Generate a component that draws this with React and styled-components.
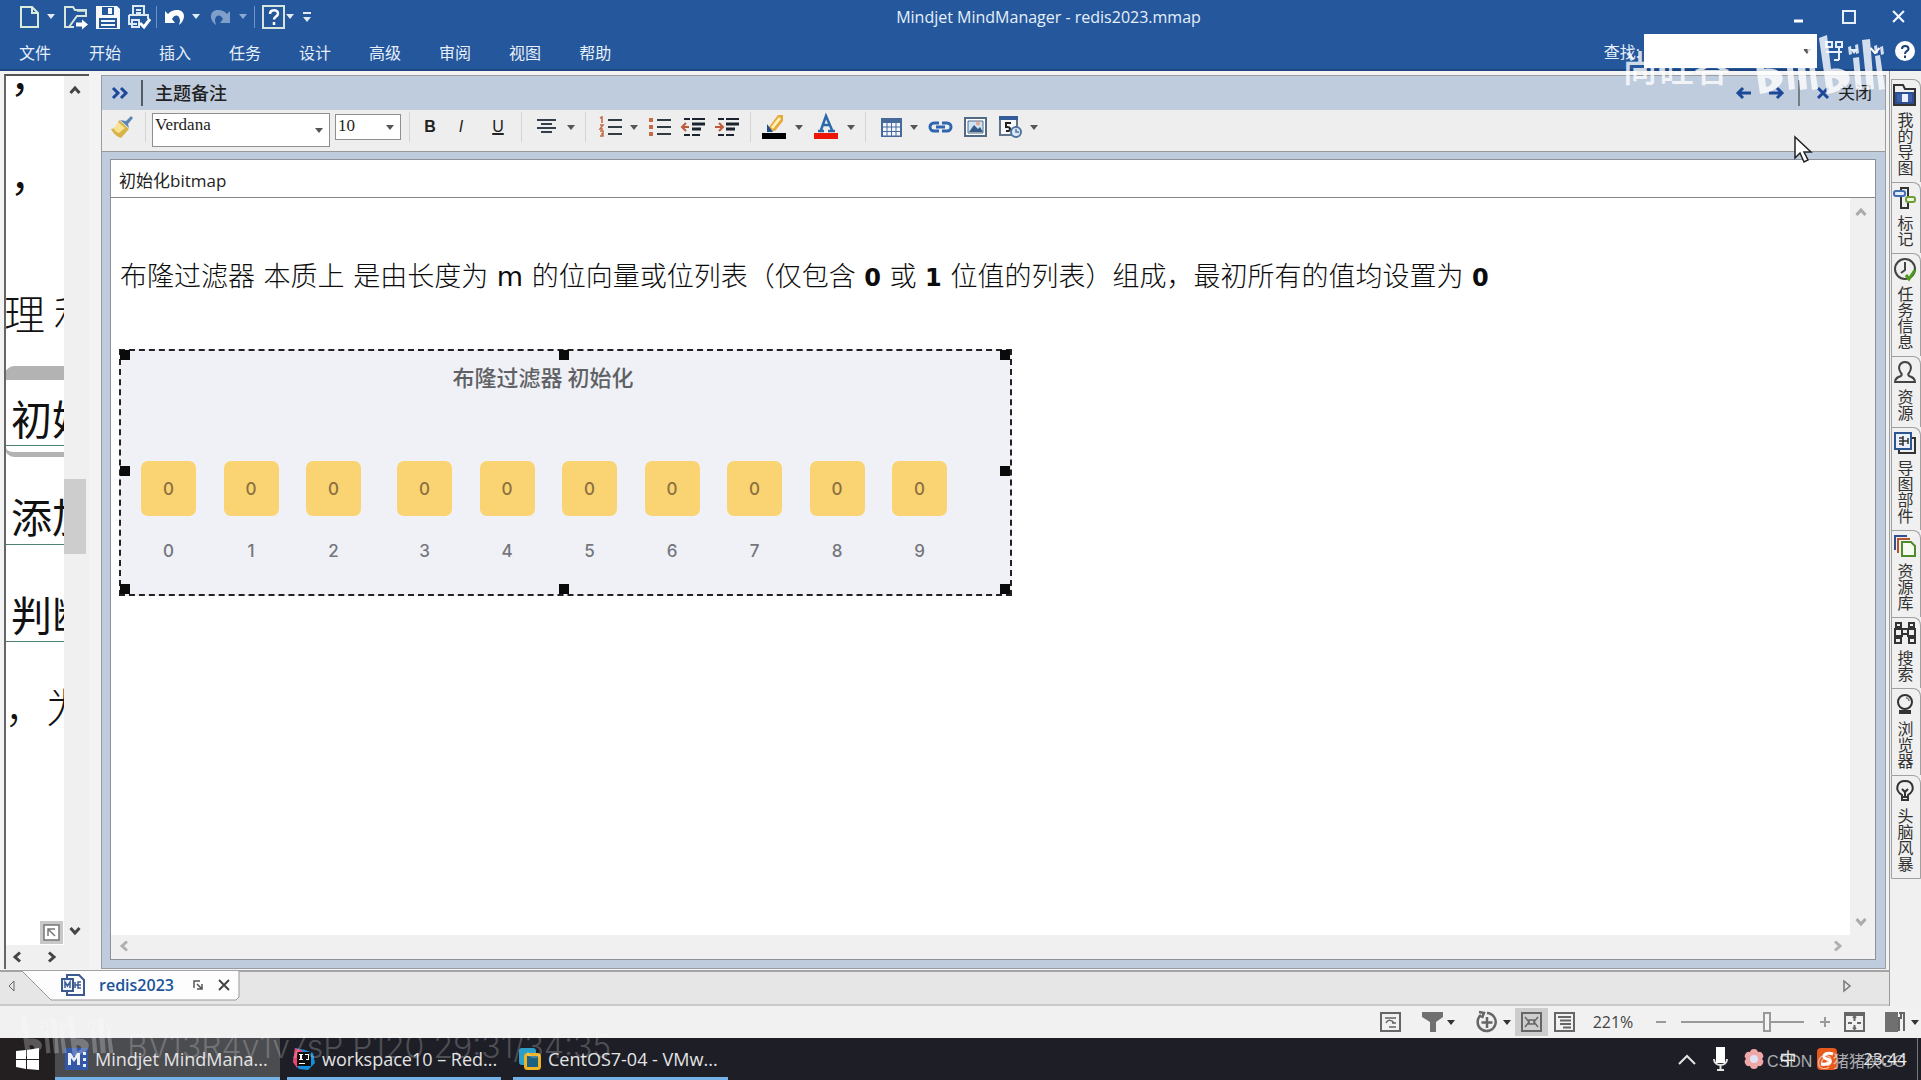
import React from "react";
import styled, { createGlobalStyle } from "styled-components";

const ui = `"Open Sans", "Noto Sans CJK SC", sans-serif`;

const GlobalStyle = createGlobalStyle`
  * { box-sizing: border-box; }
  body { margin: 0; overflow: hidden; font-family: ${ui}; font-size: 16px; color: #222; }
  button, input, select { font: inherit; color: inherit; }
  button { border: 0; padding: 0; background: none; }
  svg { display: block; flex: none; overflow: visible; }
`;

const Window = styled.div`
  position: relative;
  display: flex;
  flex-direction: column;
  height: 100vh;
  background: #f0f0f0;
`;

/* ---------- title bar ---------- */
const TitleBar = styled.header`
  background: #25579c;
  border-bottom: 2px solid #1e4680;
  color: #e6effa;
`;
const TitleRow = styled.div`
  display: flex;
  align-items: center;
  height: 33px;
`;
const Row = styled.div`
  display: flex;
  align-items: center;
  padding-left: ${(p) => p.$left || 0}px;
`;
const Title = styled.h1`
  flex: 1;
  margin: 0;
  padding-left: 4px;
  text-align: center;
  font-size: 16px;
  font-weight: 400;
  line-height: 24px;
`;
const Slot = styled.button`
  display: flex;
  align-items: center;
  justify-content: center;
  flex: none;
  width: ${(p) => p.$w}px;
  height: 28px;
  margin-right: ${(p) => p.$gap || 0}px;
  background: ${(p) => (p.$active ? "#cdcdcd" : "transparent")};
`;
const Divider = styled.span`
  display: flex;
  justify-content: center;
  flex: none;
  width: ${(p) => p.$w}px;
  &::before {
    content: "";
    width: ${(p) => p.$t || 1}px;
    height: ${(p) => p.$h}px;
    background: ${(p) => p.$c};
  }
`;
const MenuRow = styled.div`
  display: flex;
  justify-content: space-between;
  align-items: center;
  height: 36px;
`;
const Menu = styled.nav`
  display: flex;
  gap: 38px;
  padding: 3px 0 0 19px;
`;
const MenuItem = styled.button`
  min-width: 32px;
  white-space: nowrap;
  line-height: 24px;
`;
const Search = styled.label`
  display: flex;
  align-items: center;
  gap: 4px;
`;
const SearchBox = styled.span`
  display: flex;
  align-items: center;
  width: 173px;
  height: 34px;
  background: #fff;
  color: #444;
  input { flex: 1; min-width: 0; height: 30px; border: 0; outline: 0; background: none; }
`;

/* ---------- workspace ---------- */
const Body = styled.div`
  display: flex;
  flex: 1;
  min-height: 0;
`;
const MainColumn = styled.div`
  display: flex;
  flex-direction: column;
  flex: 1;
  min-width: 0;
  border-right: 1px solid #9b9b9b;
`;
const Workspace = styled.div`
  display: flex;
  flex: 1;
  min-height: 0;
  padding: 3px 3px 1px 4px;
  background: #f3f3f3;
`;
const MapPane = styled.section`
  display: grid;
  grid-template: 1fr 24px / 1fr 25px;
  width: 85px;
  flex: none;
  margin-right: 12px;
  border-left: 2px solid #666;
  border-top: 2px solid #555;
  background: #f0f0f0;
`;
const Canvas = styled.div`
  position: relative;
  overflow: hidden;
  background: #fff;
`;
const Topic = styled.div`
  position: absolute;
  left: ${(p) => p.$x}px;
  top: ${(p) => p.$y}px;
  white-space: nowrap;
  font-family: "Noto Sans CJK SC", sans-serif;
  font-size: 41px;
  font-weight: ${(p) => (p.$light ? 300 : 400)};
  line-height: 52px;
  color: #111;
`;
const TopicLine = styled.div`
  position: absolute;
  left: 0;
  right: 0;
  top: ${(p) => p.$y}px;
  height: 1px;
  background: #4d8075;
`;
const Selection = styled.div`
  position: absolute;
  left: -1px;
  top: 290px;
  width: 140px;
  height: 91px;
  border: solid #b3b3b3;
  border-width: 14px 5px 5px 1px;
  border-radius: 9px;
`;
const Corner = styled.button`
  position: absolute;
  right: 1px;
  bottom: 1px;
  display: grid;
  place-items: center;
  width: 23px;
  height: 23px;
  background: #c8c8c8;
`;
const MapScroll = styled.div`
  display: flex;
  flex-direction: column;
  align-items: center;
  justify-content: space-between;
  padding-right: 3px;
`;
const Thumb = styled.div`
  width: 22px;
  height: 75px;
  background: #cdcdcd;
`;
const Spacer = styled.span`
  flex: ${(p) => p.$grow};
`;
const MapScrollX = styled.div`
  grid-column: 1 / -1;
  display: flex;
  align-items: center;
  gap: 10px;
`;

const Panel = styled.section`
  display: flex;
  flex-direction: column;
  flex: 1;
  min-width: 0;
  margin-top: 1px;
  border: 1px solid #989da3;
  background: #bfccdd;
`;
const PanelHead = styled.header`
  display: flex;
  align-items: center;
  height: 34px;
  flex: none;
`;
const PanelTitle = styled.h2`
  flex: 1;
  margin: 0 0 0 10px;
  font-size: 18px;
  font-weight: 500;
  line-height: 24px;
`;
const CloseText = styled.span`
  width: 47px;
  font-size: 17px;
  line-height: 22px;
`;
const Toolbar = styled.div`
  display: flex;
  align-items: center;
  height: 42px;
  flex: none;
  padding-bottom: 7px;
  background: #eee;
  border-bottom: 1px solid #999;
`;
const Combo = styled.div`
  position: relative;
  align-self: flex-start;
  width: ${(p) => p.$w}px;
  height: ${(p) => p.$h}px;
  margin: ${(p) => p.$m};
  border: 1px solid #8f8f8f;
  background: #fff;
  select {
    display: block;
    appearance: none;
    width: 100%;
    height: 22px;
    padding: 0 2px;
    border: 0;
    outline: 0;
    background: none;
    color: #222;
    font-family: "Liberation Serif", serif;
    font-size: 17px;
    line-height: 20px;
  }
  svg { position: absolute; right: 6px; top: calc(50% - 2px); pointer-events: none; }
`;
const Letter = styled.span`
  font-family: "Liberation Sans", sans-serif;
  font-size: 16px;
  font-weight: ${(p) => (p.$light ? 400 : 700)};
  font-style: ${(p) => (p.$italic ? "italic" : "normal")};
  text-decoration: ${(p) => (p.$under ? "underline 2px" : "none")};
`;
const PanelBody = styled.div`
  display: flex;
  flex: 1;
  min-height: 0;
  padding: 7px 9px 8px 8px;
`;
const Note = styled.div`
  display: flex;
  flex-direction: column;
  flex: 1;
  min-width: 0;
  border: 1px solid #8d9298;
  background: #fff;
`;
const NoteTitle = styled.input`
  width: 100%;
  height: 38px;
  flex: none;
  padding: 2px 8px 0;
  border: 0;
  border-bottom: 1px solid #888;
  outline: 0;
  font-size: 17px;
`;
const Editor = styled.div`
  display: grid;
  grid-template: 1fr 24px / 1fr 25px;
  flex: 1;
  min-height: 0;
  background: #f0f0f0;
`;
const Page = styled.article`
  overflow: hidden;
  padding: 59px 8px 0;
  background: #fff;
`;
const Paragraph = styled.p`
  margin: 0 0 51px;
  padding-left: 1px;
  font-family: "DejaVu Sans", "Noto Sans CJK SC", sans-serif;
  font-size: 27px;
  font-weight: 300;
  line-height: 39px;
  white-space: nowrap;
  color: #0c0c0c;
  b { font-size: 24px; font-weight: 700; }
  span { font-weight: 400; }
`;
const Figure = styled.figure`
  position: relative;
  width: 893px;
  height: 247px;
  margin: 0;
  padding: 10px 0 0 20px;
  border: 2px dashed #222;
  background: #eff1f6;
`;
const Handle = styled.i`
  position: absolute;
  left: ${(p) => p.$x};
  top: ${(p) => p.$y};
  width: 10px;
  height: 10px;
  background: #0a0a0a;
`;
const Caption = styled.figcaption`
  width: 804px;
  text-align: center;
  font-family: "Noto Sans CJK SC", sans-serif;
  font-size: 22px;
  font-weight: 500;
  line-height: 30px;
  color: #5f6165;
`;
const Bits = styled.div`
  display: flex;
  gap: 36px;
  padding-top: 70px;
`;
const BitGroup = styled.div`
  display: flex;
  justify-content: space-between;
  width: ${(p) => p.$w}px;
`;
const Bit = styled.div`
  display: flex;
  flex-direction: column;
  align-items: center;
  gap: 21px;
  width: 55px;
  font-family: Inter, sans-serif;
  font-size: 17px;
  font-weight: 500;
  line-height: 28px;
  color: #74767b;
`;
const Cell = styled.span`
  display: grid;
  place-items: center;
  width: 55px;
  height: 55px;
  border-radius: 7px;
  background: #fad472;
  color: #8a7040;
`;
const ScrollY = styled.div`
  display: flex;
  flex-direction: column;
  align-items: center;
  justify-content: space-between;
  padding: 8px 4px 7px 0;
`;
const ScrollX = styled.div`
  display: flex;
  align-items: center;
  justify-content: space-between;
  padding: 0 6px 2px 7px;
`;

/* ---------- document tabs ---------- */
const TabStrip = styled.div`
  display: flex;
  align-items: flex-start;
  justify-content: space-between;
  flex: none;
  height: 36px;
  border-top: 2px solid #a3a3a3;
  border-bottom: 2px solid #c9c9c9;
  background: #e6e6e6;
`;
const DocTab = styled.div`
  position: relative;
  display: flex;
  align-items: center;
  width: 218px;
  height: 29px;
  margin-top: -2px;
  padding-left: 39px;
`;
const TabShape = styled.svg`
  position: absolute;
  left: 0;
  top: 0;
`;
const DocName = styled.span`
  position: relative;
  width: 95px;
  padding-left: 14px;
  font-size: 16px;
  font-weight: 600;
  line-height: 22px;
  color: #1c5499;
`;
const TabAction = styled.button`
  position: relative;
  display: flex;
  justify-content: center;
  width: ${(p) => p.$w}px;
`;

/* ---------- side tabs ---------- */
const SideBar = styled.aside`
  width: 31px;
  flex: none;
  padding: 8px 0 0 1px;
  background: #f0f0f0;
`;
const SideTab = styled.button`
  position: relative;
  display: flex;
  flex-direction: column;
  align-items: center;
  gap: 6px;
  width: 30px;
  padding: 4px 3px 6px 0;
  border: solid #a0a0a0;
  border-width: 1px 1px 0 1px;
  border-top-right-radius: 8px;
  &:last-child { border-bottom-width: 1px; }
`;
const SideText = styled.span`
  writing-mode: vertical-rl;
  font-size: 16px;
  line-height: 22px;
  color: #333;
`;

/* ---------- status bar ---------- */
const StatusBar = styled.footer`
  display: flex;
  align-items: center;
  justify-content: flex-end;
  flex: none;
  height: 32px;
  padding-right: 1px;
  background: #f1f1f1;
`;
const Zoom = styled.span`
  width: 66px;
  text-align: center;
  font-size: 16px;
  line-height: 22px;
  color: #444;
`;
const Range = styled.input`
  appearance: none;
  width: 123px;
  height: 22px;
  margin: 0 5px;
  background: linear-gradient(#9a9a9a, #9a9a9a) center / 100% 2px no-repeat;
  &::-webkit-slider-thumb {
    appearance: none;
    width: 8px;
    height: 20px;
    border: 2px solid #999;
    background: #f4f4f4;
  }
`;

/* ---------- taskbar ---------- */
const Taskbar = styled.footer`
  display: flex;
  flex: none;
  height: 42px;
  background: #1d1e26;
  color: #e4e4e4;
`;
const Start = styled.button`
  display: grid;
  place-items: center;
  width: 55px;
  background: #231f20;
`;
const Task = styled.button`
  display: flex;
  align-items: center;
  gap: 7px;
  width: ${(p) => p.$w}px;
  margin-right: ${(p) => p.$gap}px;
  padding: 3px 0 0 ${(p) => p.$pad}px;
  border-bottom: 3px solid #73b1e6;
  background: ${(p) => (p.$active ? "#4b4c50" : "transparent")};
  font-size: 18px;
  line-height: 24px;
  white-space: nowrap;
`;
const Tray = styled.div`
  display: flex;
  align-items: center;
  margin-left: auto;
  padding-right: 4px;
  border-right: 1px solid #777;
  font-size: 17px;
  margin-right: 3px;
`;
const TrayText = styled.span`
  width: ${(p) => p.$w}px;
  text-align: center;
  line-height: 24px;
`;

/* ---------- overlays ---------- */
const Overlay = styled.div`
  position: absolute;
  ${(p) => (p.$right !== undefined ? `right: ${p.$right}px;` : `left: ${p.$left}px;`)}
  ${(p) => (p.$bottom !== undefined ? `bottom: ${p.$bottom}px;` : `top: ${p.$top}px;`)}
  display: flex;
  align-items: center;
  pointer-events: none;
  white-space: nowrap;
  color: rgba(255, 255, 255, ${(p) => p.$a || 1});
  font-family: ${(p) => p.$font || ui};
  font-size: ${(p) => p.$size || 16}px;
  line-height: ${(p) => p.$line || 24}px;
  font-weight: ${(p) => p.$weight || 400};
`;

/* ---------- icons ---------- */
const Svg = ({ w = 22, h = w, vb, children, ...r }) => (
  <svg width={w} height={h} viewBox={vb || `0 0 ${w} ${h}`} fill="none" stroke="currentColor" strokeWidth="2" aria-hidden="true" {...r}>
    {children}
  </svg>
);
const Caret = ({ c = "#555" }) => (
  <Svg w={8} h={5} stroke="none"><path d="M0 0h8L4 5z" fill={c} /></Svg>
);
const Chevron = ({ dir = "up", c = "#444", w = 12, t = 3 }) => {
  const deg = { up: 0, right: 90, down: 180, left: 270 }[dir];
  return <Svg w={w} vb="0 0 12 12" stroke={c} strokeWidth={t}><path d="M1.5 9 6 4l4.500 5" transform={`rotate(${deg} 6 6)`} /></Svg>;
};
const CaretSlot = ({ w, gap, c, label }) => (
  <Slot $w={w} $gap={gap} aria-label={label || "更多"}><Caret c={c} /></Slot>
);

const NewIcon = () => <Svg w={20} h={24} stroke="#d9ecd9"><path d="M1 2h11l6 6v14H1zM12 2v6h6" /></Svg>;
const OpenIcon = () => (
  <Svg w={24} h={24} stroke="#d5e6dd"><path d="M10 22H1V2h8l2 3h11v6h-9L5 22" /><path d="M13 6h8" strokeWidth="1.500" /><path d="M12 17.500h6v-3l6 5-6 5v-3h-6z" fill="#fff" stroke="none" /></Svg>
);
const SaveIcon = () => (
  <Svg w={24} h={24} stroke="none"><path d="M0 1h21l3 3v20H0z" fill="#f5f9fc" /><path d="M6 2h12v8H6zM3 13h18v10H3z" fill="#25579c" /><path d="M12 3h4v6h-4zM5 15h14v2H5zM5 19h14v2H5z" fill="#f5f9fc" /></Svg>
);
const PrintIcon = () => (
  <Svg w={24} h={24} stroke="#dbe9f2"><path d="M6 10V1h11v9M9 5h5M9 8h5M2 10h19v4M2 10v9h8M5 15h7v7H5z" /><path d="m13 18 4 4 6-8" strokeWidth="3" stroke="#fff" /></Svg>
);
const UndoIcon = ({ flip, c = "#fff" }) => (
  <Svg w={20} h={18} stroke="none"><path transform={flip ? "matrix(-1 0 0 1 20 0)" : undefined} d="M0 3v12h10l-3-4c3-6 8-4 8 2l-1 4c7-5 7-15-2-15-4 0-6 1-9 4z" fill={c} /></Svg>
);
const HelpBox = () => (
  <Svg w={23} h={24} stroke="#d5e4df"><path d="M1 1h21v22H1z" /><path d="M8 9c0-5 8-5 8-.5 0 3-4 3-4 6M12 17v3" stroke="#fff" strokeWidth="2.500" /></Svg>
);
const BrushIcon = () => (
  <Svg w={22} h={22} stroke="none"><path d="m20 0 2 2-5 6 1 4-9-8 6 1z" fill="#5b86b4" /><path d="m8 4 10 9-8 9c-4-1-8-5-10-9 4 0 6-3 8-9z" fill="#d9b348" /><path d="m7 6 7 6-6 5c-3-1-4-2-5-4z" fill="#f7e291" /></Svg>
);
const AlignIcon = () => <Svg w={19} h={18} stroke="#333f4d"><path d="M0 2h19M4 6h11M0 10h19M4 14h11" /></Svg>;
const ListIcon = ({ num }) => (
  <Svg w={23} h={20}>
    <path d="M9 3h14M9 10h14M9 17h14" stroke="#303c42" />
    <path d={num ? "M1 1l2-1v6M1 8h3l-3 4h3M1 14h3v5H1M4 17H2" : "M1 3h4M1 10h4M1 17h4"} stroke="#c46a45" strokeWidth={num ? 1.5 : 4} />
  </Svg>
);
const IndentIcon = ({ inn }) => (
  <Svg w={24} h={20} stroke="#1b242e"><path d="M3 2h6M11 2h13M3 18h6M11 18h8" strokeWidth="2" /><path d="M11 7h13M11 12h9" strokeWidth="3" /><path d={inn ? "M0 10h7M4 6l4 4-4 4" : "M8 10H1M5 6l-4 4 4 4"} stroke="#bd5a3c" /></Svg>
);
const MarkerIcon = () => (
  <Svg w={24} h={24} stroke="none"><path d="M16 0h5v6l-8 10H7V12z" fill="#e5aa3b" /><path d="m17 2-8 10 2 2L19 4z" fill="#fff2ba" /><path d="m5 9 6 8-6 0z" fill="#1d4e8c" /><path d="M0 18h24v6H0z" fill="#000" /></Svg>
);
const FontColorIcon = () => (
  <Svg w={24} h={24} stroke="#2a6aaa"><path d="M7 15 12 1l6 14M9 10h7M4 16h6M14 16h7" strokeWidth="2.500" /><path d="M0 21h24" stroke="#ed1506" strokeWidth="6" /></Svg>
);
const TableIcon = () => (
  <Svg w={21} h={19} stroke="none"><path d="M0 0h21v19H0z" fill="#466b9b" />{[0, 1, 2].map((r) => [0, 1, 2, 3].map((c) => <path key={`${r}${c}`} d={`M${2 + c * 4.500} ${5 + r * 4.500}h3.500v3.500h-3.500z`} fill="#f2f7ff" />))}</Svg>
);
const LinkIcon = () => (
  <Svg w={23} h={12} stroke="#2f64ae" strokeWidth="3"><path d="M10 2H5a4 4 0 0 0 0 8h5M13 2h5a4 4 0 0 1 0 8h-5M7 6h9" /></Svg>
);
const PictureIcon = () => (
  <Svg w={23} h={20} stroke="#536a85"><path d="M1 1h21v18H1z" fill="#fff" /><path d="M4 4h15v12H4z" fill="#cfe3f5" strokeWidth="1" /><path d="m5 15 5-7 4 4 2-2 3 5z" fill="#355a86" stroke="none" /><circle cx="14" cy="6.500" r="2" fill="#e8a887" stroke="none" /></Svg>
);
const DateIcon = () => (
  <Svg w={23} h={22}><path d="M1 2h17v17H1z" stroke="#62748a" fill="#f7f9fb" /><path d="M0 2h19" stroke="#345e9a" strokeWidth="4" /><path d="M12 7H7v4c5-1 6 5 0 4" stroke="#222" /><circle cx="17" cy="16" r="5" fill="#d9e9f8" stroke="#52759e" /><path d="M17 13v3h3" stroke="#52759e" strokeWidth="1.500" /></Svg>
);
const Arrow = ({ flip }) => (
  <Svg w={15} h={12} stroke="#1d489a" strokeWidth="3"><path d={flip ? "M0 6h13M8 1l5 5-5 5" : "M15 6H2M7 1 2 6l5 5"} /></Svg>
);
const Cross = ({ s = 11, c = "#444", t = 2 }) => (
  <Svg w={s} vb="0 0 12 12" stroke={c} strokeWidth={t}><path d="m1 1 10 10M11 1 1 11" /></Svg>
);

const sideIcons = {
  folder: <Svg w={23} h={22} stroke="#333"><path d="M1 21V1h9l2 4h10v16z" /><path d="M3 9h17v10H3z" fill="#3c5fae" stroke="#2e4c90" /><path d="M9 10h6v8H9z" fill="#eef" stroke="none" /></Svg>,
  marks: <Svg w={22} h={22} stroke="#333"><path d="M7 1h7v20H7z" /><rect x="0" y="4" width="11" height="5" rx="2" fill="#e3ecfa" stroke="#416eb0" /><rect x="12" y="10" width="9" height="5" rx="2" fill="#ecf7dc" stroke="#6e9d3a" /></Svg>,
  clock: <Svg w={22} h={22} stroke="#444"><circle cx="11" cy="11" r="10" /><path d="M11 4v8l-4 3" /><path d="m12 17 3 4 6-9" stroke="#4d9a1e" strokeWidth="3" /></Svg>,
  person: <Svg w={22} h={22} stroke="#444"><path d="M1 21c0-4 3-5 6-6 1-1 1-2 0-3C3 6 6 1 11 1s8 5 4 11c-1 1-1 2 0 3 3 1 6 2 6 6z" /></Svg>,
  parts: <Svg w={22} h={22} stroke="#333"><path d="M5 18v3h16V6h-3" /><path d="M1 1h16v16H1z" stroke="#2f5590" fill="#eaf1fb" /><path d="M9 4v10M9 9h5M14 6v6M5 6h4M5 9h4M5 12h4" strokeWidth="1.500" /></Svg>,
  library: <Svg w={22} h={22}><path d="M1 15V1h12" stroke="#334f8f" /><path d="M4 18V4h12" stroke="#b4532c" /><path d="M8 7h9l4 4v10H8z" stroke="#4e8b2f" fill="#f5fbef" /></Svg>,
  search: <Svg w={22} h={22} stroke="#333"><path d="M2 1h5v4H2zM15 1h5v4h-5zM1 7h7v7H1zM14 7h7v7h-7zM1 16h6v5H1zM15 16h6v5h-6zM8 7h6v5H8z" /></Svg>,
  globe: <Svg w={18} h={22} stroke="#333"><circle cx="9" cy="9" r="7" /><path d="M10 5c2 0 3 1 3 3" strokeWidth="1" /><path d="M4 18h10v2H4z" fill="#333" /></Svg>,
  bulb: <Svg w={18} h={22} stroke="#333"><path d="M6 15C-2 10 1 1 9 1s11 9 3 14v5H6zM6 9l3 3 3-3M9 12v4M6 17h6" /></Svg>,
};

const Bili = ({ w, h, o }) => (
  <svg width={w} height={h} viewBox="0 0 136 60" fill="#fff" opacity={o} aria-label="bilibili" role="img">
    {[0, 67].map((x) => (
      <g key={x} transform={`translate(${x} 0)`}>
        <path d="M0 3 8 0l4 34c16-3 24 9 15 17-5 4-11 7-19 8zM13 43l1 9c8-2 8-9-1-9z" fillRule="evenodd" />
        <path d="m34 23 6-1 3 32-6 1zM29 12l3-1 1 8-3 1zM36 10l3-1 1 9-3 1zM43 5l8-1 4 50-7 1zM56 21l5-1 5 34-6 1zM55 11l3-1 1 8-3 1zM61 12l3-1 1 8-3 1z" />
      </g>
    ))}
  </svg>
);

const menus = ["文件", "开始", "插入", "任务", "设计", "高级", "审阅", "视图", "帮助"];
const sideTabs = [
  ["我的导图", "folder"], ["标记", "marks"], ["任务信息", "clock"], ["资源", "person"], ["导图部件", "parts"],
  ["资源库", "library"], ["搜索", "search"], ["浏览器", "globe"], ["头脑风暴", "bulb"],
];
const handles = [
  ["-1px", "-1px"], ["438px", "-1px"], ["879px", "-1px"], ["-1px", "115px"],
  ["879px", "115px"], ["-1px", "233px"], ["438px", "233px"], ["879px", "233px"],
];
const BitList = ({ values, w }) => (
  <BitGroup $w={w}>{values.map((n) => <Bit key={n}><Cell>0</Cell><span>{n}</span></Bit>)}</BitGroup>
);

function Header() {
  const pale = "#e2ebf5";
  return (
    <TitleBar>
      <TitleRow>
        <Row $left={18}>
          <Slot $w={24} aria-label="新建"><NewIcon /></Slot><CaretSlot w={18} c={pale} />
          <Slot $w={32} aria-label="打开"><OpenIcon /></Slot>
          <Slot $w={31} aria-label="保存"><SaveIcon /></Slot>
          <Slot $w={31} aria-label="打印"><PrintIcon /></Slot>
          <Divider $w={5} $h={22} $c="#6f93c4" />
          <Slot $w={31} aria-label="撤销"><UndoIcon /></Slot><CaretSlot w={12} c={pale} />
          <Slot $w={36} aria-label="恢复"><UndoIcon flip c="#7f9fca" /></Slot><CaretSlot w={10} c="#8dabd2" />
          <Divider $w={13} $h={22} $c="#6f93c4" />
          <Slot $w={25} aria-label="帮助"><HelpBox /></Slot><CaretSlot w={8} c={pale} />
          <Slot $w={26} aria-label="自定义"><Svg w={8} h={10} stroke="none"><path d="M0 0h8v2H0zM0 5h8l-4 5z" fill={pale} /></Svg></Slot>
        </Row>
        <Title>Mindjet MindManager - redis2023.mmap</Title>
        <Row>
          <Slot $w={50} aria-label="最小化"><Svg w={9} h={16}><path d="M0 12h9" strokeWidth="3" stroke="#fff" /></Svg></Slot>
          <Slot $w={52} aria-label="最大化"><Svg w={14}><path d="M1 1h12v12H1z" /></Svg></Slot>
          <Slot $w={46} aria-label="关闭窗口"><Cross s={13} c="#f2f7ff" /></Slot>
        </Row>
      </TitleRow>
      <MenuRow>
        <Menu>{menus.map((m) => <MenuItem key={m}>{m}</MenuItem>)}</Menu>
        <Row>
          <Search>查找:
            <SearchBox><input aria-label="查找" /><Slot as="span" $w={20}><Caret /></Slot></SearchBox>
          </Search>
          <Slot $w={34} aria-label="视图"><Svg w={20} h={20}><path d="M2 1h6v5H2zM12 1h6v5h-6zM2 11h16M15 7v12M10 19h5" /></Svg></Slot>
          <CaretSlot w={6} c={pale} />
          <Slot $w={36} aria-label="折叠"><Chevron dir="down" c="#fff" t={2} /></Slot>
          <Slot $w={24} $gap={4} aria-label="帮助主题">
            <Svg w={20}><circle cx="10" cy="10" r="10" fill="#fff" stroke="none" /><path d="M7 8c0-4 6.500-4 6.500 0 0 2-3.500 2-3.500 5M10 14.500v2.500" stroke="#1c3f73" strokeWidth="2" /></Svg>
          </Slot>
        </Row>
      </MenuRow>
    </TitleBar>
  );
}

function MapView() {
  return (
    <MapPane>
      <Canvas>
        <Topic $x={4} $y={-28}>，</Topic>
        <Topic $x={4} $y={71}>，</Topic>
        <Topic $x={-2} $y={210} $light>理 利用</Topic>
        <Selection />
        <Topic $x={5} $y={315}>初始化</Topic><TopicLine $y={369} />
        <Topic $x={5} $y={413}>添加</Topic><TopicLine $y={468} />
        <Topic $x={5} $y={511}>判断</Topic><TopicLine $y={565} />
        <Topic $x={-1} $y={603} $light>，为</Topic>
        <Corner aria-label="导航"><Svg w={17}><path d="M1 1h15v15H1z" stroke="#777" fill="#fff" strokeWidth="1.500" /><path d="M5 12V5h7M5 5l7 7" stroke="#777" strokeWidth="1.500" /></Svg></Corner>
      </Canvas>
      <MapScroll>
        <Slot $w={20} aria-label="向上"><Chevron /></Slot>
        <Spacer $grow={374} />
        <Thumb />
        <Spacer $grow={363} />
        <Slot $w={20} aria-label="向下"><Chevron dir="down" /></Slot>
      </MapScroll>
      <MapScrollX>
        <Slot $w={22} aria-label="向左"><Chevron dir="left" /></Slot>
        <Slot $w={28} aria-label="向右"><Chevron dir="right" /></Slot>
      </MapScrollX>
    </MapPane>
  );
}

function FormatBar() {
  const line = { $h: 30, $c: "#d4d4d4" };
  return (
    <Toolbar>
      <Slot $w={40} aria-label="格式刷"><BrushIcon /></Slot>
      <Divider $w={7} {...line} />
      <Combo $w={178} $h={34} $m="3px 5px 0 3px"><select aria-label="字体"><option>Verdana</option></select><Caret /></Combo>
      <Combo $w={66} $h={26} $m="4px 0 0"><select aria-label="字号"><option>10</option></select><Caret /></Combo>
      <Divider $w={16} {...line} />
      <Slot $w={26} aria-label="加粗"><Letter>B</Letter></Slot>
      <Slot $w={36} aria-label="斜体"><Letter $italic $light>I</Letter></Slot>
      <Slot $w={38} aria-label="下划线"><Letter $under $light>U</Letter></Slot>
      <Divider $w={8} {...line} />
      <Slot $w={42} aria-label="对齐"><AlignIcon /></Slot><CaretSlot w={8} />
      <Divider $w={20} {...line} />
      <Slot $w={30} aria-label="编号"><ListIcon num /></Slot><CaretSlot w={18} />
      <Slot $w={33} aria-label="项目符号"><ListIcon /></Slot>
      <Slot $w={34} aria-label="减少缩进"><IndentIcon /></Slot>
      <Slot $w={34} aria-label="增加缩进"><IndentIcon inn /></Slot>
      <Divider $w={12} {...line} />
      <Slot $w={36} aria-label="突出显示"><MarkerIcon /></Slot><CaretSlot w={14} />
      <Slot $w={40} aria-label="字体颜色"><FontColorIcon /></Slot><CaretSlot w={10} />
      <Divider $w={18} {...line} />
      <Slot $w={34} aria-label="表格"><TableIcon /></Slot><CaretSlot w={12} />
      <Slot $w={40} aria-label="链接"><LinkIcon /></Slot>
      <Slot $w={30} aria-label="图片"><PictureIcon /></Slot>
      <Slot $w={40} aria-label="日期"><DateIcon /></Slot><CaretSlot w={8} />
    </Toolbar>
  );
}

function NotesPanel() {
  return (
    <Panel>
      <PanelHead>
        <Slot $w={36} aria-label="收起"><Svg w={17} h={12} stroke="#1d489a" strokeWidth="3"><path d="m1 1 5 5-5 5M9 1l5 5-5 5" /></Svg></Slot>
        <Divider $w={7} $h={26} $t={2} $c="#555b64" />
        <PanelTitle>主题备注</PanelTitle>
        <Slot $w={38} aria-label="上一个"><Arrow /></Slot>
        <Slot $w={28} aria-label="下一个"><Arrow flip /></Slot>
        <Divider $w={18} $h={26} $t={2} $c="#777d86" />
        <Slot $w={30} aria-label="关闭面板"><Cross s={12} c="#1d489a" t={3} /></Slot>
        <CloseText>关闭</CloseText>
      </PanelHead>
      <FormatBar />
      <PanelBody>
        <Note>
          <NoteTitle aria-label="主题" defaultValue="初始化bitmap" />
          <Editor>
            <Page>
              <Paragraph>布隆过滤器 本质上 是由长度为 <span>m</span> 的位向量或位列表（仅包含 <b>0</b> 或 <b>1</b> 位值的列表）组成，最初所有的值均设置为 <b>0</b></Paragraph>
              <Figure>
                <Caption>布隆过滤器 初始化</Caption>
                <Bits><BitList values={[0, 1, 2]} w={220} /><BitList values={[3, 4, 5, 6, 7, 8, 9]} w={550} /></Bits>
                {handles.map(([x, y]) => <Handle key={x + y} $x={x} $y={y} />)}
              </Figure>
            </Page>
            <ScrollY><Chevron c="#aaa" /><Chevron dir="down" c="#aaa" /></ScrollY>
            <ScrollX><Chevron dir="left" c="#b0b0b0" /><Chevron dir="right" c="#b0b0b0" /></ScrollX>
          </Editor>
        </Note>
      </PanelBody>
    </Panel>
  );
}

function Status() {
  const g = "#666";
  return (
    <StatusBar>
      <Slot $w={32} $gap={12} aria-label="备注"><Svg w={21} h={20} stroke={g}><path d="M1 1h19v18H1z" /><path d="M5 6h11M6 11c2-4 6-3 8 0M12 11h4M9 15h7" strokeWidth="1.500" /></Svg></Slot>
      <Slot $w={28} aria-label="筛选"><Svg w={21} h={20} stroke="none"><path d="M0 0h21v5l-7 5v10H8V10L0 5z" fill="#707070" /></Svg></Slot>
      <CaretSlot w={10} gap={16} c="#333" />
      <Slot $w={30} aria-label="详细级别"><Svg w={22} stroke={g}><path d="M5 4a9 9 0 1 0 6-2M3 1l5 1-2 5M11 6v11M5.500 11.500h11" strokeWidth="2.500" /></Svg></Slot>
      <CaretSlot w={10} gap={3} c="#333" />
      <Slot $w={33} $active aria-label="导图视图"><Svg w={21} h={20} stroke={g}><path d="M1 1h19v18H1z" /><path d="M4 5l4 5-4 5M17 5l-4 5 4 5M8 8h5v4H8z" strokeWidth="1.500" /></Svg></Slot>
      <Slot $w={32} aria-label="大纲视图"><Svg w={21} h={20} stroke={g}><path d="M1 1h19v18H1z" /><path d="M4 5h13M6 8.500h11M6 12h11M9 15.500h8" strokeWidth="2" /></Svg></Slot>
      <Zoom>221%</Zoom>
      <Slot $w={30} aria-label="缩小"><Svg w={10} stroke="#999"><path d="M0 5h10" /></Svg></Slot>
      <Range type="range" aria-label="缩放" min="0" max="100" defaultValue="71" />
      <Slot $w={31} aria-label="放大"><Svg w={10} stroke="#999"><path d="M0 5h10M5 0v10" /></Svg></Slot>
      <Slot $w={28} $gap={12} aria-label="适合窗口"><Svg w={21} h={20} stroke={g}><path d="M1 1h19v18H1zM1 3h19" /><path d="M10.500 5v4M10.500 13v4M4 11h4M13 11h4M9 6l1.500-1.500L12 6M9 15.500l1.500 1.500 1.500-1.500" /></Svg></Slot>
      <Slot $w={30} aria-label="任务面板"><Svg w={20} h={20} stroke={g}><path d="M0 0h13v20H0z" fill="#707070" stroke="none" /><path d="M14 19V6h2V1h4M14 1h5v18" /></Svg></Slot>
      <CaretSlot w={10} c="#333" />
    </StatusBar>
  );
}

function TaskBar() {
  return (
    <Taskbar>
      <Start aria-label="开始菜单"><Svg w={23} h={22} stroke="none"><path d="m0 3 10-1v9H0zM11 2l12-2v11H11zM0 12h10v9L0 19zM11 12h12v10l-12-1z" fill="#fff" /></Svg></Start>
      <Task $w={225} $gap={7} $pad={10} $active>
        <Svg w={23} h={22} stroke="none"><path d="M0 0h23v22H0z" fill="#3458a8" /><path d="M3 17V5h3l3 5 3-5h3v12h-3v-7l-3 4-3-4v7zM18 4h3v3h-3zM18 10h3v3h-3zM18 16h3v3h-3z" fill="#e9eefb" /></Svg>
        Mindjet MindMana...
      </Task>
      <Task $w={214} $gap={12} $pad={6}>
        <Svg w={22} stroke="none"><path d="m2 0 10 2 8 3 2 10-7 7-9-1-6-7z" fill="#1490df" /><path d="m2 0 8 3-6 17-4-6z" fill="#f0436b" /><path d="M4 4h14v14H4z" fill="#111" /><path d="M6 6h4v1H6zM7 7h2v4H7zM6 11h4v1H6zM12 6h4v6h-3v-1h2V7h-3zM6 15h6v1H6z" fill="#fff" /></Svg>
        workspace10 – Red...
      </Task>
      <Task $w={215} $gap={0} $pad={6}>
        <Svg w={22} stroke="none"><rect width="17" height="17" rx="3" fill="#2b9fc7" /><rect x="6.500" y="6.500" width="14" height="14" rx="2" fill="#1d6282" stroke="#f0b323" strokeWidth="3" /></Svg>
        CentOS7-04 - VMw...
      </Task>
      <Tray>
        <Slot $w={36} aria-label="显示隐藏的图标"><Svg w={18} h={11}><path d="m1 10 8-8 8 8" /></Svg></Slot>
        <Slot $w={30} aria-label="麦克风"><Svg w={15} h={24}><path d="M3 0h9v16H3z" fill="#fff" stroke="none" /><path d="M1 12c0 8 13 8 13 0M7.500 18v5M4 23h7" /></Svg></Slot>
        <Slot $w={38} aria-label="花"><Svg w={20} stroke="none">{[0, 60, 120, 180, 240, 300].map((a) => <circle key={a} cx="10" cy="4" r="4" fill="#f0a7a7" transform={`rotate(${a} 10 10)`} />)}<circle cx="10" cy="10" r="4" fill="#dfe2f5" /></Svg></Slot>
        <TrayText $w={30}>中</TrayText>
        <Slot $w={48} $gap={6} aria-label="输入法"><Svg w={22} stroke="none"><rect x="1" width="20" height="22" rx="4" fill="#e8591c" /><path d="M17 6C8 3 5 10 11 11s4 6-6 5" fill="none" stroke="#fff" strokeWidth="3" /></Svg></Slot>
        <TrayText $w={56}>23:44</TrayText>
      </Tray>
    </Taskbar>
  );
}

export default function App() {
  return (
    <Window>
      <GlobalStyle />
      <Header />
      <Body>
        <MainColumn>
          <Workspace><MapView /><NotesPanel /></Workspace>
          <TabStrip>
            <Row>
              <Slot $w={22} aria-label="上一个标签"><Svg w={7} h={12} stroke="#666" strokeWidth="1"><path d="M6 1v10L1 6z" /></Svg></Slot>
              <DocTab>
                <TabShape width="218" height="30" viewBox="0 0 218 30" aria-hidden="true"><path d="M0 0l29 29h185l3-3V0z" fill="#fdfdfd" /><path d="M0 0l29 29h185l3-3V0" fill="none" stroke="#999" /></TabShape>
                <TabAction as="span" $w={24}><Svg w={24} h={22} stroke="#3c5990"><path d="M6 5V1h12l5 5v15H6v-3" /><path d="M1 5h11v12H1z" fill="#eef3fc" /><path d="M4 14V8l2.500 4L9 8v6M14 8v6M14 11h6M20 8h-3v6h3" strokeWidth="1.500" /></Svg></TabAction>
                <DocName>redis2023</DocName>
                <TabAction $w={36} aria-label="还原标签"><Svg w={10} stroke="#555" strokeWidth="1.500"><path d="M1 8V1h6M4 4l5 5M9 4v5H4" /></Svg></TabAction>
                <TabAction $w={16} aria-label="关闭标签"><Cross s={12} /></TabAction>
              </DocTab>
            </Row>
            <Slot $w={84} aria-label="下一个标签"><Svg w={9} h={12} stroke="#777" strokeWidth="1.500"><path d="M1 1v10l6-5z" /></Svg></Slot>
          </TabStrip>
        </MainColumn>
        <SideBar>
          {sideTabs.map(([name, icon]) => <SideTab key={name}>{sideIcons[icon]}<SideText>{name}</SideText></SideTab>)}
        </SideBar>
      </Body>
      <Status />
      <TaskBar />

      <Overlay $right={191} $top={49} $size={36} $line={40} $a={0.8} $weight={500}>尚硅谷</Overlay>
      <Overlay $right={33} $top={35}><Bili w={136} h={60} o={0.8} /></Overlay>
      <Overlay $left={20} $bottom={23}><Bili w={96} h={42} o={0.25} /></Overlay>
      <Overlay $left={127} $bottom={17} $size={32} $line={32} $a={0.22} $font="Inter, sans-serif" $weight={300}>BV13R4y1v7sP P120 29:31/34:35</Overlay>
      <Overlay $right={15} $bottom={6} $size={16} $a={0.65} $font={`"Liberation Sans", "Noto Sans CJK SC", sans-serif`}>CSDN @猪猪侠GG</Overlay>
      <Overlay $right={109} $top={136}>
        <Svg w={18} h={28} stroke="#222" strokeWidth="1.500"><path d="M1 1v21l5-5 4 9 4-2-4-8h7z" fill="#fff" /></Svg>
      </Overlay>
    </Window>
  );
}
